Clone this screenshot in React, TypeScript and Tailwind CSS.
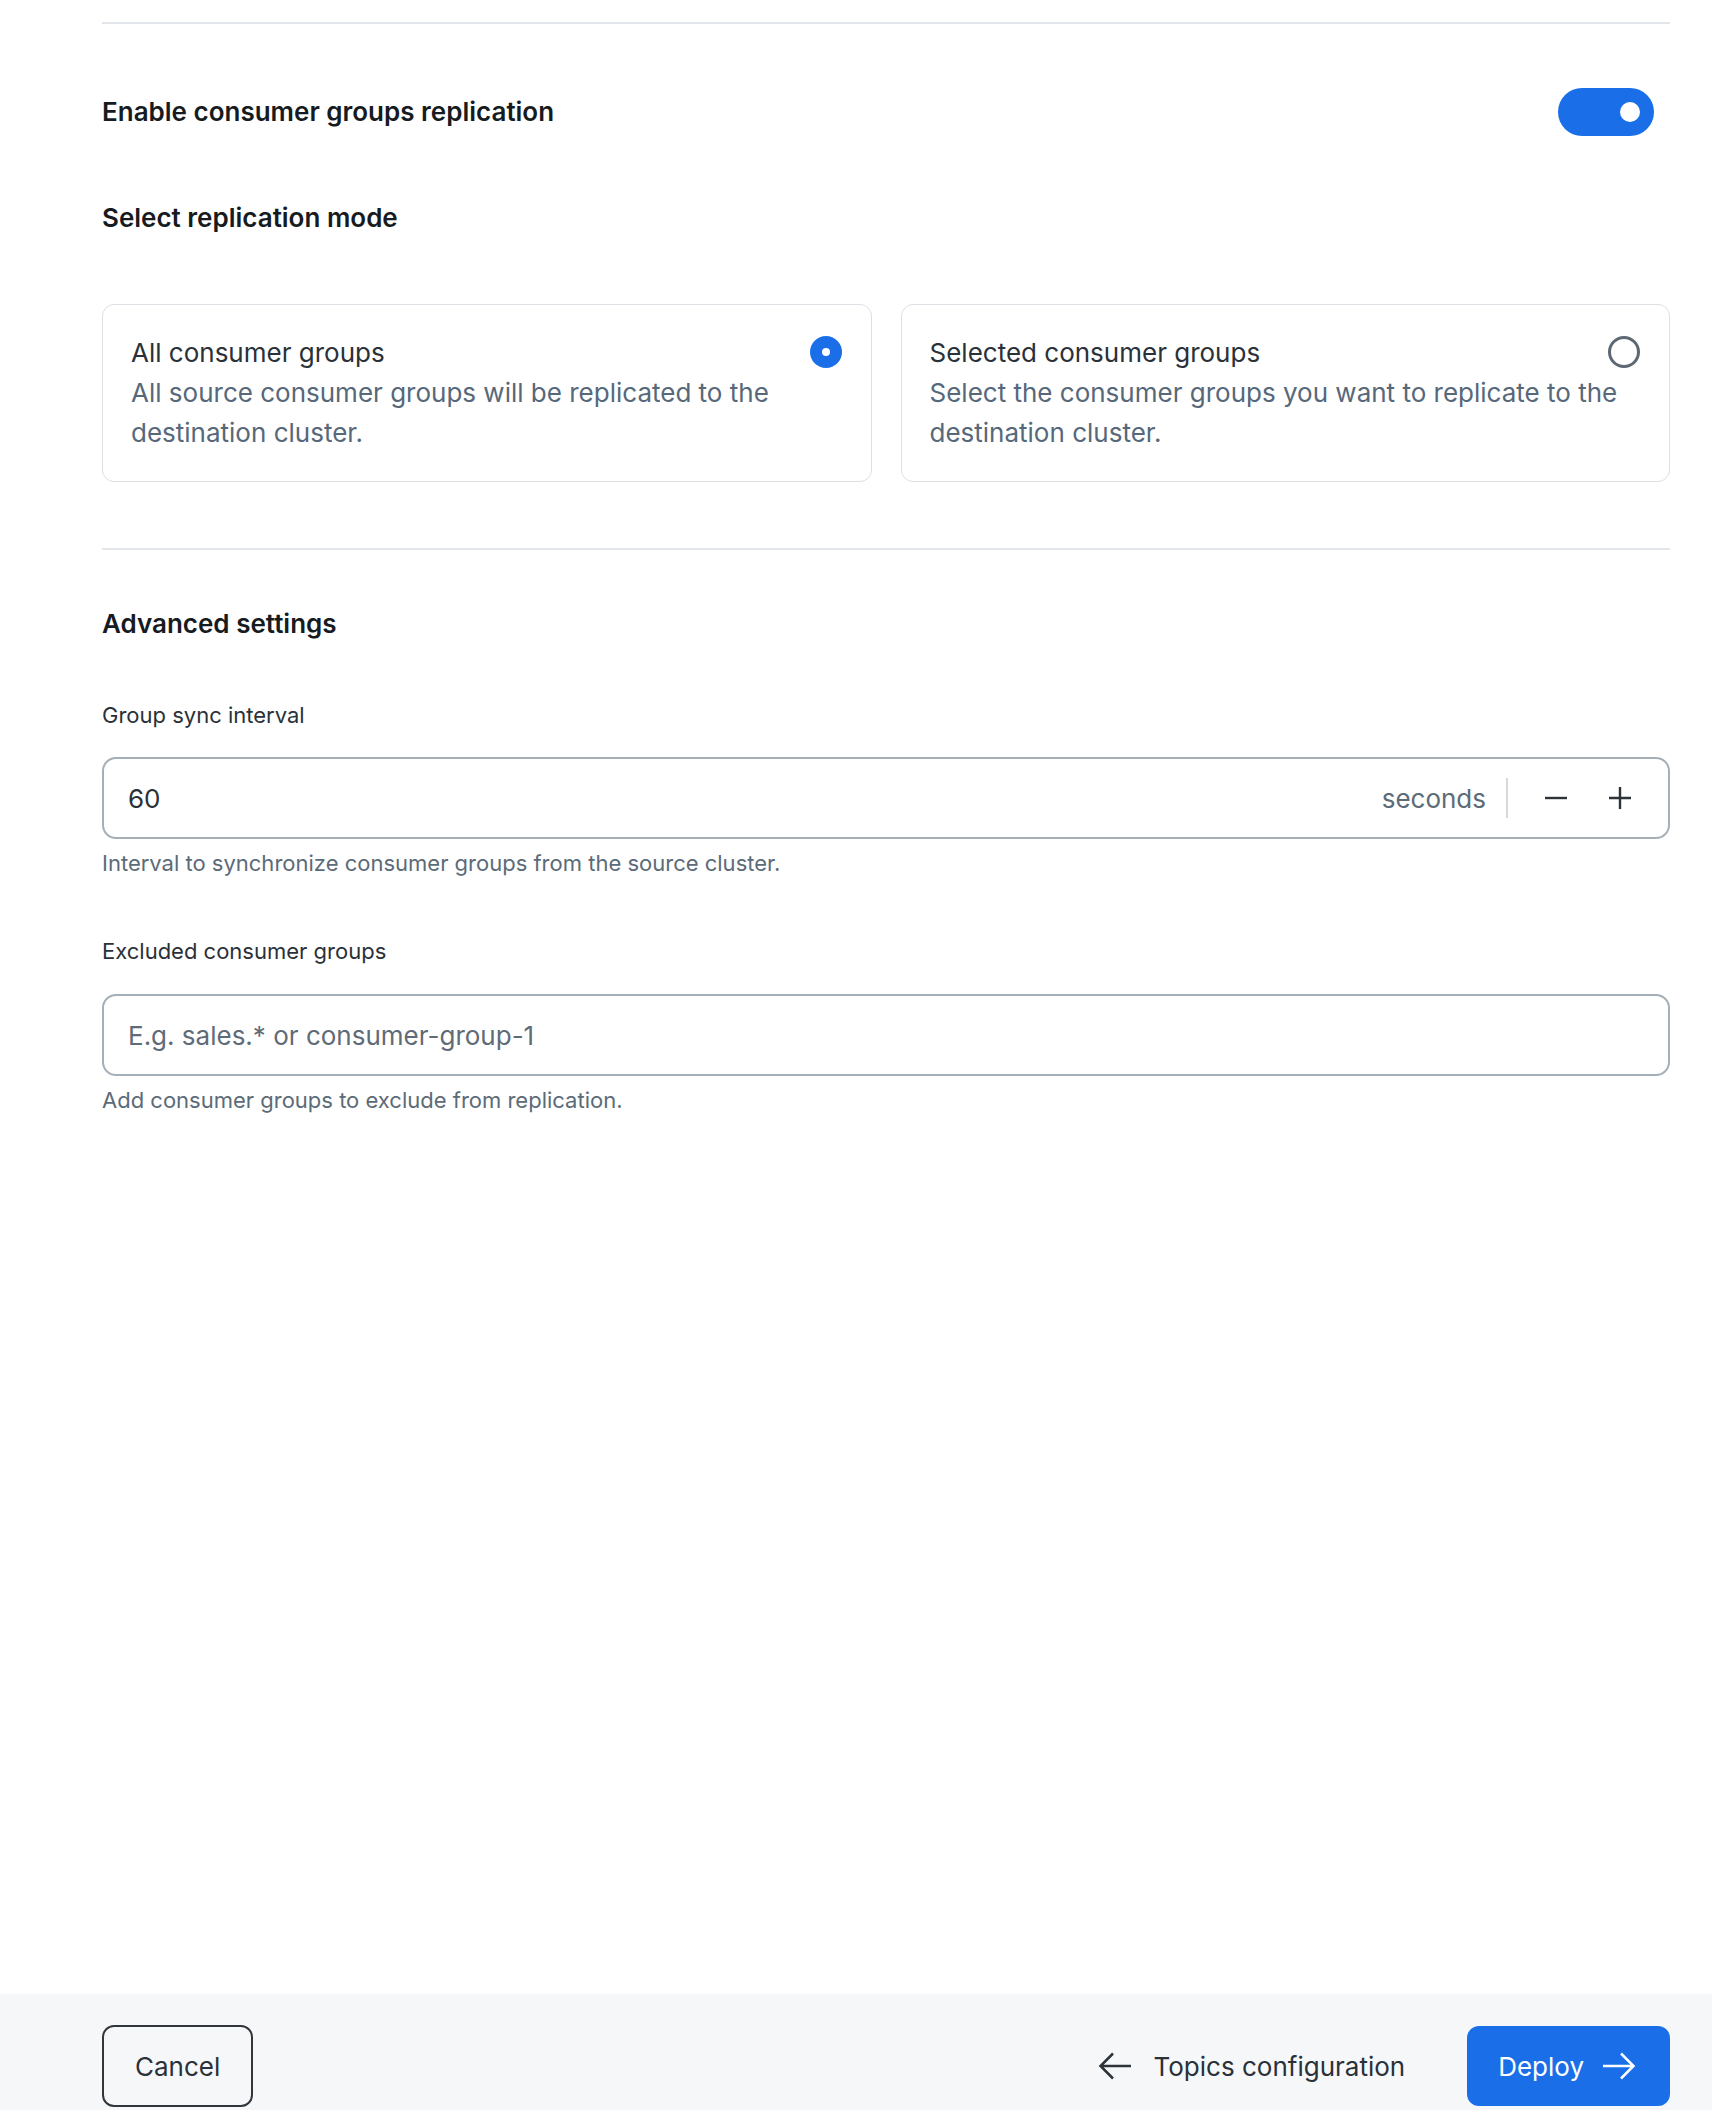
import React from "react";

const font = { fontFamily: "Inter, 'Noto Sans', sans-serif" };

function Radio({ checked }: { checked: boolean }) {
  if (checked) {
    return (
      <div className="absolute right-[29px] top-[31px] flex h-[32px] w-[32px] items-center justify-center rounded-full bg-[#1a6fe8]">
        <div className="h-[8px] w-[8px] rounded-full bg-white" />
      </div>
    );
  }
  return <div className="absolute right-[29px] top-[31px] h-[32px] w-[32px] rounded-full border-[3px] border-[#5d6873] bg-white" />;
}

function ModeCard({ title, text, checked }: { title: string; text: string; checked: boolean }) {
  return (
    <div className="relative rounded-[12px] border border-[#dcdfe4] bg-white p-7">
      <div className="flex flex-col text-[26px] leading-[40px]">
        <span className="text-[#2a3138]">{title}</span>
        <span className="text-[#56687a]">{text}</span>
      </div>
      <Radio checked={checked} />
    </div>
  );
}

function Arrow({ dir, color }: { dir: "left" | "right"; color: string }) {
  const d = dir === "left" ? "M3 18H33M15 5.5L2.5 18L15 30.5" : "M3 18H33M21 5.5L33.5 18L21 30.5";
  return (
    <svg width="36" height="36" viewBox="0 0 36 36" fill="none">
      <path d={d} stroke={color} strokeWidth="2.5" />
    </svg>
  );
}

export default function App() {
  return (
    <div className="flex min-h-screen flex-col bg-white" style={font}>
      <main className="flex-1 pl-[102px] pr-[42px]">
        <div className="pt-[22px]">
          <div className="h-[2px] bg-[#e2e5e9]" />
        </div>

        <div className="mt-[64px] flex h-[48px] items-center justify-between pr-[16px]">
          <h2 className="text-[26px] font-semibold leading-[32px] text-[#161b21]">Enable consumer groups replication</h2>
          <div className="flex h-[48px] w-[96px] items-center justify-end rounded-full bg-[#1a6fe8] pr-[14px]">
            <div className="h-[20px] w-[20px] rounded-full bg-white" />
          </div>
        </div>

        <h2 className="mt-[66px] text-[26px] font-semibold leading-[32px] text-[#161b21]">Select replication mode</h2>

        <div className="mt-[70px] grid grid-cols-2 gap-[29px]">
          <ModeCard
            checked
            title="All consumer groups"
            text="All source consumer groups will be replicated to the destination cluster."
          />
          <ModeCard
            checked={false}
            title="Selected consumer groups"
            text="Select the consumer groups you want to replicate to the destination cluster."
          />
        </div>

        <div className="mt-[66px] h-[2px] bg-[#e2e5e9]" />

        <h2 className="mt-[58px] text-[26px] font-semibold leading-[32px] text-[#161b21]">Advanced settings</h2>

        <label className="mt-[61px] block text-[22px] leading-[28px] text-[#2a3138]">Group sync interval</label>
        <div className="mt-[28px] flex h-[82px] items-center rounded-[14px] border-2 border-[#a5afb7] pl-[24px] pr-[24px]">
          <span className="flex-1 text-[26px] text-[#2a3138]">60</span>
          <span className="text-[26px] text-[#5b6b78]">seconds</span>
          <div className="ml-[20px] h-[40px] w-[2px] bg-[#d5dadf]" />
          <div className="ml-[24px] flex h-[48px] w-[48px] items-center justify-center">
            <svg width="24" height="24" viewBox="0 0 24 24" fill="none">
              <path d="M1 12H23" stroke="#2c3339" strokeWidth="2.4" />
            </svg>
          </div>
          <div className="ml-[16px] flex h-[48px] w-[48px] items-center justify-center">
            <svg width="24" height="24" viewBox="0 0 24 24" fill="none">
              <path d="M1 12H23M12 1V23" stroke="#2c3339" strokeWidth="2.4" />
            </svg>
          </div>
        </div>
        <p className="mt-[10px] text-[22px] leading-[28px] text-[#5b6b78]">
          Interval to synchronize consumer groups from the source cluster.
        </p>

        <label className="mt-[60px] block text-[22px] leading-[28px] text-[#2a3138]">Excluded consumer groups</label>
        <div className="mt-[29px] flex h-[82px] items-center rounded-[14px] border-2 border-[#a5afb7] pl-[24px] pr-[24px]">
          <span className="text-[26px] text-[#5f6b77]">E.g. sales.* or consumer-group-1</span>
        </div>
        <p className="mt-[10px] text-[22px] leading-[28px] text-[#5b6b78]">Add consumer groups to exclude from replication.</p>
      </main>

      <footer className="flex items-center justify-between bg-[#f6f7f9] pb-[3px] pl-[102px] pr-[42px] pt-[31px]">
        <button className="flex h-[82px] items-center rounded-[12px] border-2 border-[#30363c] px-[31px] text-[26px] text-[#2a3138]">
          Cancel
        </button>
        <div className="flex items-center gap-[32px]">
          <button className="flex h-[80px] items-center gap-[20px] px-[30px] text-[26px] text-[#2a3138]">
            <Arrow dir="left" color="#2c3339" />
            Topics configuration
          </button>
          <button className="flex h-[80px] items-center gap-[16px] rounded-[12px] bg-[#1a6fe8] pl-[31px] pr-[34px] text-[26px] text-white">
            Deploy
            <Arrow dir="right" color="#ffffff" />
          </button>
        </div>
      </footer>
    </div>
  );
}
